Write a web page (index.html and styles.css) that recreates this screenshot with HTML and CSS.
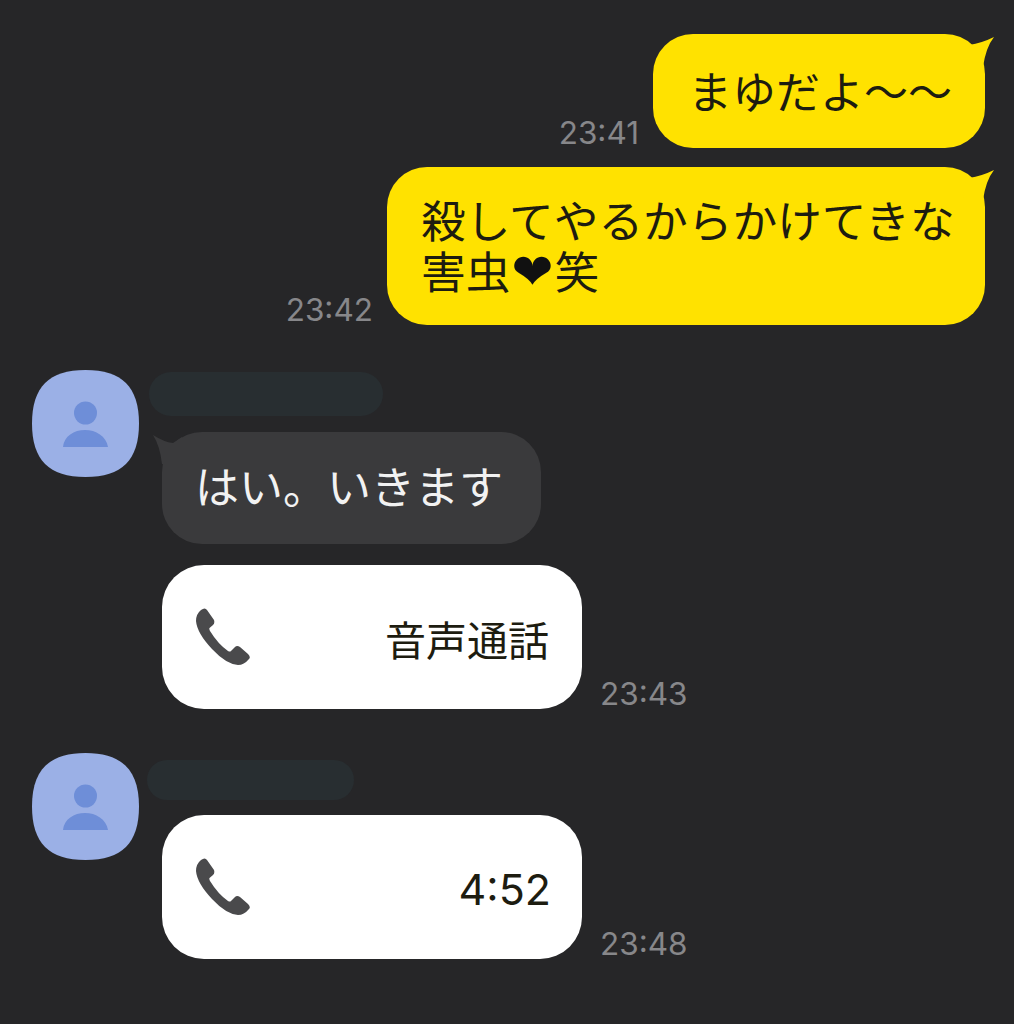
FILE: index.html
```html
<!DOCTYPE html>
<html lang="ja">
<head>
    <meta charset="UTF-8">
    <meta name="viewport" content="width=device-width, initial-scale=1.0">
    <title>Chat</title>
    <link rel="stylesheet" href="styles.css">
</head>
<body>
    <div class="chat">
        <!-- sent -->
        <div class="row-sent first">
            <span class="time">23:41</span>
            <div class="bubble bubble-yellow short">
                まゆだよ〜〜
                <svg class="tail-right" viewBox="0 0 32 32"><path d="M3 7L6 10Q19 8 31 2 23 12 20 32L0 32Z"/></svg>
            </div>
        </div>
        <div class="row-sent second">
            <span class="time">23:42</span>
            <div class="bubble bubble-yellow long">
                <span class="text-line">殺してやるからかけてきな</span>
                <span class="text-line">害虫<span class="heart">❤︎</span>笑</span>
                <svg class="tail-right" viewBox="0 0 32 32"><path d="M3 7L6 10Q19 8 31 2 23 12 20 32L0 32Z"/></svg>
            </div>
        </div>

        <!-- received -->
        <div class="row-received group-one">
            <svg class="avatar" viewBox="0 0 107 107">
                <path class="avatar-bg" d="M53.5 0C90 0 107 17 107 53.5S90 107 53.5 107 0 90 0 53.5 17 0 53.5 0Z"/>
                <circle class="avatar-fg" cx="53.5" cy="43" r="11.5"/>
                <path class="avatar-fg" d="M31 77C32 66 42 60 53 60S74 66 76 77Z"/>
            </svg>
            <div class="messages">
                <div class="name-bar name-one"></div>
                <div class="bubble bubble-dark">
                    はい。いきます
                    <svg class="tail-left" viewBox="0 0 32 32"><path d="M1 3Q12 10 21 11L30 5V32H10Q8 14 1 3Z"/></svg>
                </div>
                <div class="call-row call-gap">
                    <div class="call-card">
                        <svg class="phone" viewBox="0 0 55 57"><path d="M5 2Q9-1 11 2L18 12Q19 15 17 17L13.500 20Q13 21 14 23 22 36 32 43 34 44 35 43L39 39Q41 37 44 39L52 46Q55 49 53 51 48 57 42 57 30 56 16 41 1 25 0 13 0 6 5 2Z"/></svg>
                        <span class="call-label">音声通話</span>
                    </div>
                    <span class="time">23:43</span>
                </div>
            </div>
        </div>

        <div class="row-received group-two">
            <svg class="avatar" viewBox="0 0 107 107">
                <path class="avatar-bg" d="M53.5 0C90 0 107 17 107 53.5S90 107 53.5 107 0 90 0 53.5 17 0 53.5 0Z"/>
                <circle class="avatar-fg" cx="53.5" cy="43" r="11.5"/>
                <path class="avatar-fg" d="M31 77C32 66 42 60 53 60S74 66 76 77Z"/>
            </svg>
            <div class="messages">
                <div class="name-bar name-two"></div>
                <div class="call-row">
                    <div class="call-card">
                        <svg class="phone" viewBox="0 0 55 57"><path d="M5 2Q9-1 11 2L18 12Q19 15 17 17L13.500 20Q13 21 14 23 22 36 32 43 34 44 35 43L39 39Q41 37 44 39L52 46Q55 49 53 51 48 57 42 57 30 56 16 41 1 25 0 13 0 6 5 2Z"/></svg>
                        <span class="call-label call-duration">4:52</span>
                    </div>
                    <span class="time">23:48</span>
                </div>
            </div>
        </div>
    </div>
</body>
</html>
```

FILE: styles.css
```css
body {
    margin: 0;
    background-color: #262628;
    font-family: "Noto Sans CJK JP", "Noto Sans", sans-serif;
    font-weight: 400;
    color: #1d1c10;
}
.chat {
    height: 1024px;
    box-sizing: border-box;
    padding: 34px 29px 0 32px;
    overflow: hidden;
}
.row-sent {
    display: flex;
    justify-content: flex-end;
    align-items: flex-end;
    gap: 14px;
}
.row-sent.second {
    margin-top: 19px;
}
.time {
    font-family: Inter, "Liberation Sans", sans-serif;
    font-weight: 400;
    font-size: 31.5px;
    line-height: 30px;
    color: #87878a;
}
.bubble {
    position: relative;
    box-sizing: border-box;
    font-size: 44px;
    line-height: 51px;
    white-space: nowrap;
}
.bubble-yellow {
    background-color: #ffe200;
    border-radius: 40px;
}
.short {
    width: 332px;
    height: 114px;
    padding: 31px 0 0 35px;
}
.long {
    width: 598px;
    height: 158px;
    padding: 26px 0 0 34px;
    font-size: 44.7px;
}
.text-line {
    display: block;
    height: 51px;
}
.heart {
    display: inline-block;
    width: 44px;
    font-family: "DejaVu Sans", sans-serif;
    font-size: 50px;
    line-height: 40px;
    text-align: center;
    color: #111;
}
.tail-right {
    position: absolute;
    top: 1px;
    right: -10px;
    width: 32px;
    height: 32px;
    fill: #ffe200;
}
.tail-left {
    position: absolute;
    top: 0;
    left: -10px;
    width: 32px;
    height: 32px;
    fill: #3a3a3c;
}
.row-received {
    display: flex;
    align-items: flex-start;
}
.group-one {
    margin-top: 45px;
}
.group-two {
    margin-top: 44px;
}
.avatar {
    width: 107px;
    height: 107px;
    flex-shrink: 0;
}
.avatar-bg {
    fill: #9bb0e6;
}
.avatar-fg {
    fill: #6e8ed8;
}
.messages {
    margin-left: 23px;
}
.name-bar {
    height: 44px;
    border-radius: 22px;
    background-color: #282e31;
    margin-left: -13px;
    margin-top: 2px;
}
.name-one {
    width: 234px;
}
.name-two {
    width: 207px;
    height: 40px;
    margin-left: -15px;
    margin-top: 7px;
}
.bubble-dark {
    width: 379px;
    height: 112px;
    margin-top: 16px;
    padding: 28px 0 0 33px;
    border-radius: 40px;
    background-color: #3a3a3c;
    color: #f2f2f2;
}
.call-row {
    display: flex;
    align-items: flex-end;
    gap: 18px;
}
.group-one .call-row {
    margin-top: 21px;
}
.group-two .call-row {
    margin-top: 15px;
}
.call-card {
    width: 420px;
    height: 144px;
    box-sizing: border-box;
    padding: 43px 33px 0 34px;
    display: flex;
    justify-content: space-between;
    align-items: flex-start;
    background-color: #ffffff;
    border-radius: 42px;
}
.phone {
    width: 55px;
    height: 57px;
    fill: #4a4a4c;
}
.call-label {
    font-size: 41px;
    line-height: 70px;
    margin-top: -5px;
}
.call-duration {
    font-family: Inter, "Liberation Sans", sans-serif;
    font-weight: 400;
    font-size: 43px;
    margin-top: -4px;
    margin-right: -2px;
}
```
